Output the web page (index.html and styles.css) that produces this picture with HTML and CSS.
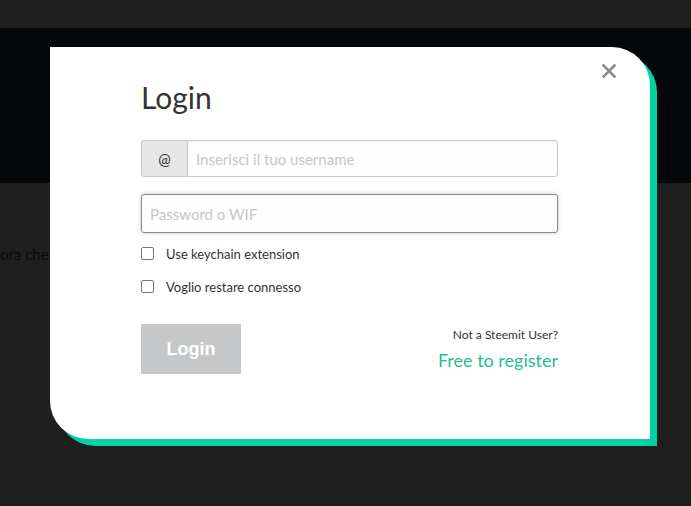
FILE: index.html
```html
<!DOCTYPE html>
<html lang="it">
<head>
<meta charset="utf-8">
<title>Login</title>
<link rel="stylesheet" href="styles.css">
</head>
<body>
<div class="topbar"></div>
<div class="band"></div>
<main class="content">
  <p class="bgtext">ora che <span class="link">(</span></p>
</main>

<div class="modal">
  <button class="close" aria-label="Chiudi">
    <svg width="14" height="14" viewBox="0 0 14 14"><path d="M1.5 1.5 L12.5 12.5 M12.5 1.5 L1.5 12.5" stroke="#8a8a8a" stroke-width="2.6" stroke-linecap="square"/></svg>
  </button>
  <h1 class="title">Login</h1>
  <div class="group">
    <span class="addon">@</span>
    <input class="field" type="text" placeholder="Inserisci il tuo username">
  </div>
  <input class="field pass" type="password" placeholder="Password o WIF">
  <label class="check"><span class="box"></span>Use keychain extension</label>
  <label class="check"><span class="box"></span>Voglio restare connesso</label>
  <div class="actions">
    <button class="btn">Login</button>
    <div class="register">
      <div class="note">Not a Steemit User?</div>
      <a class="reglink" href="#">Free to register</a>
    </div>
  </div>
</div>
</body>
</html>
```
FILE: styles.css
```css
html, body {
  margin: 0;
  padding: 0;
}
body {
  background: #1f1f1f;
  font-family: "Source Sans Pro", Lato, "Noto Sans", sans-serif;
  width: 691px;
  height: 506px;
  overflow: hidden;
  position: relative;
}
.topbar {
  height: 28px;
  background: #1f1f1f;
}
.band {
  height: 155px;
  background: #05070a;
}
.content {
  padding: 62px 0 0 0;
}
.bgtext {
  margin: 0;
  font-size: 15px;
  color: #0b0b0b;
}
.bgtext .link {
  color: #0b2a33;
}
.modal {
  position: absolute;
  left: 50px;
  top: 47px;
  width: 600px;
  height: 392px;
  box-sizing: border-box;
  background: #fff;
  border-radius: 0 38px 0 38px;
  box-shadow: 7px 7px 0 #00d2a4;
  padding: 28px 92px 0 91px;
}
.close {
  position: absolute;
  right: 34px;
  top: 17px;
  border: 0;
  background: none;
  padding: 0;
  width: 14px;
  height: 14px;
  cursor: pointer;
}
.close svg { display: block; }
.title {
  margin: 0 0 21px;
  font-size: 30px;
  font-weight: 400;
  line-height: 44px;
  color: #333;
}
.group {
  display: flex;
  height: 37px;
  box-sizing: border-box;
  margin-bottom: 17px;
}
.addon {
  width: 46px;
  flex: none;
  box-sizing: border-box;
  background: #e6e6e6;
  border: 1px solid #cacaca;
  border-right: 0;
  border-radius: 3px 0 0 3px;
  display: flex;
  align-items: center;
  justify-content: center;
  font-size: 15px;
  color: #333;
}
.field {
  display: block;
  box-sizing: border-box;
  width: 100%;
  height: 37px;
  border: 1px solid #cacaca;
  background: #fefefe;
  font-family: inherit;
  font-size: 15px;
  padding: 0 8px;
  color: #333;
  outline: none;
}
.group .field {
  border-radius: 0 3px 3px 0;
  box-shadow: inset 0 1px 2px rgba(0,0,0,0.06);
}
.field::placeholder {
  color: #c6c6c6;
}
.pass {
  height: 39px;
  border-color: #8a8a8a;
  border-radius: 3px;
  box-shadow: 0 0 4px #cacaca;
  margin-bottom: 12px;
}
.check {
  display: flex;
  align-items: center;
  font-size: 13px;
  color: #333;
  height: 17px;
  margin-bottom: 16px;
}
.box {
  width: 13px;
  height: 13px;
  box-sizing: border-box;
  border: 1px solid #767676;
  border-radius: 2px;
  margin-right: 12px;
  flex: none;
}
.actions {
  display: flex;
  justify-content: space-between;
  align-items: flex-start;
  margin-top: 29px;
}
.btn {
  width: 100px;
  height: 50px;
  border: 0;
  background: #c6c7c9;
  color: #fff;
  font-family: "Liberation Sans", Arial, sans-serif;
  font-weight: 700;
  font-size: 18px;
  padding: 0;
}
.register {
  text-align: right;
  padding-top: 3px;
}
.note {
  font-size: 12px;
  color: #333;
  line-height: 16px;
}
.reglink {
  display: block;
  margin-top: 6px;
  font-size: 18px;
  line-height: 22px;
  color: #1fbf8f;
  text-decoration: none;
}
```
